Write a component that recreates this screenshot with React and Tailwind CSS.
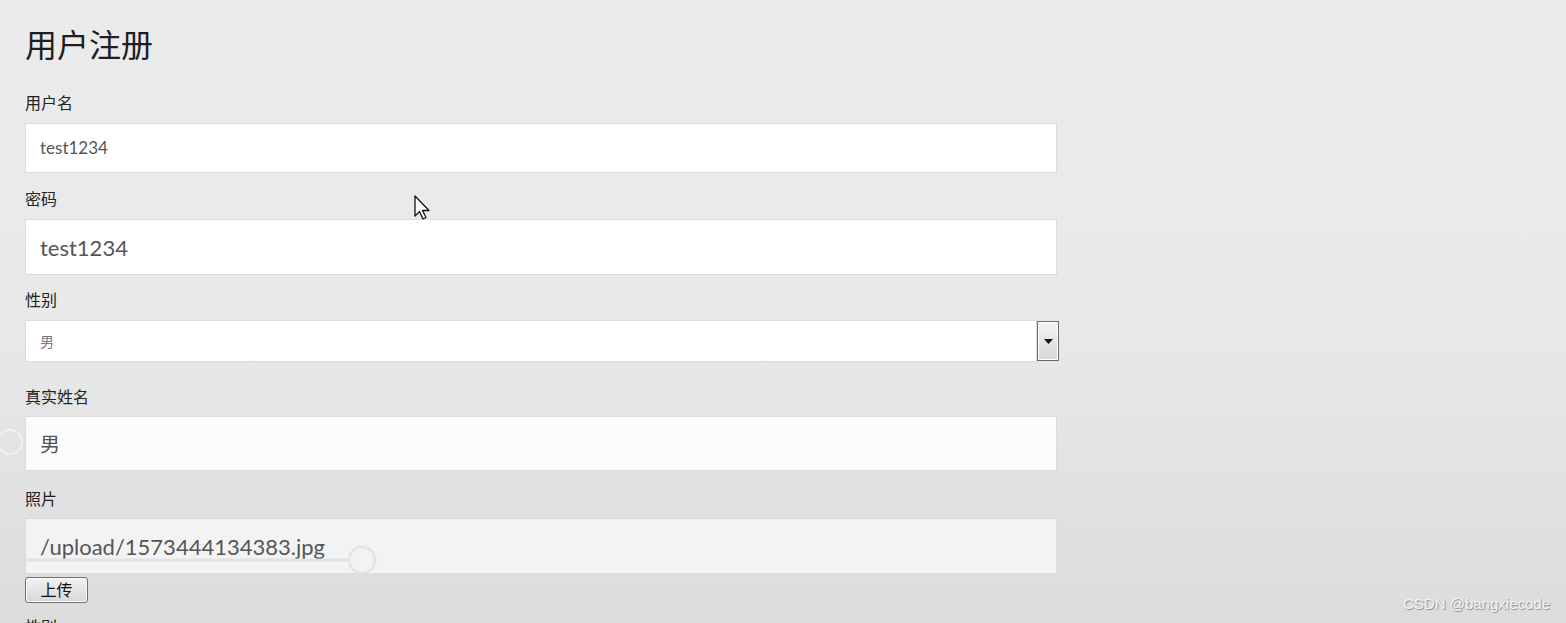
import React from "react";

const latin = "font-['Lato','Noto_Sans_CJK_SC',sans-serif]";

const Label = ({ children, className = "" }) => (
    <p className={`text-[16px] leading-[20px] text-[#222] ${className}`}>{children}</p>
);

const Field = ({ value, className = "", textClass = "text-[22px]" }) => (
    <div className={`w-[1032px] border border-[#dcdcdc] flex items-center px-[14px] text-[#555] ${textClass} ${className}`}>
        {value}
    </div>
);

const App = () => {
    return (
        <div className={`relative h-[623px] w-full overflow-hidden bg-linear-to-b from-[#ebebeb] via-[#e9e9e9] to-[#dcdcdc] ${latin}`}>
            <div className="flex flex-col pl-[25px] pt-[27px]">
                <h1 className="text-[32px] leading-[36px] text-[#1e1e1e]">用户注册</h1>

                <Label className="mt-[30px]">用户名</Label>
                <Field value="test1234" className="mt-[10px] h-[50px] bg-white" textClass="text-[17px]" />

                <Label className="mt-[16px]">密码</Label>
                <Field value="test1234" className="mt-[10px] h-[56px] bg-white" />

                <Label className="mt-[15px]">性别</Label>
                <div className="mt-[10px] flex h-[42px] w-[1034px] items-center">
                    <div className="flex h-full flex-1 items-center border border-[#dcdcdc] bg-white px-[14px] text-[14px] text-[#777]">男</div>
                    <div className="flex h-[40px] w-[22px] items-center justify-center border border-[#6a6a6a] bg-linear-to-b from-[#f4f4f4] to-[#d6d6d6] shadow-[inset_0_0_0_1px_#fff]">
                        <svg width="9" height="5" viewBox="0 0 9 5"><path d="M0 0h9L4.5 5z" fill="#111" /></svg>
                    </div>
                </div>

                <Label className="mt-[25px]">真实姓名</Label>
                <Field value="男" className="mt-[9px] h-[55px] bg-[#fcfcfc]" textClass="text-[20px]" />

                <Label className="mt-[18px]">照片</Label>
                <Field value="/upload/1573444134383.jpg" className="mt-[9px] h-[56px] bg-[#f3f3f3]" />

                <button className="mt-[3px] h-[26px] w-[63px] rounded-[3px] border border-[#707070] bg-linear-to-b from-[#f2f2f2] to-[#d8d8d8] text-[16px] leading-none text-[#111] shadow-[inset_0_0_0_1px_#fafafa]">上传</button>

                <Label className="mt-[14px]">性别</Label>
            </div>

            {/* faint player overlay */}
            <svg className="pointer-events-none absolute left-0 top-0" width="400" height="600">
                <line x1="0" y1="560" x2="348" y2="560" stroke="#d4e2ee" strokeWidth="3" opacity="0.8" />
                <circle cx="362" cy="560" r="13" fill="none" stroke="#d4e2ee" strokeWidth="2.5" opacity="0.8" />
                <circle cx="10" cy="442" r="12" fill="none" stroke="#ffffff" strokeWidth="2" opacity="0.5" />
            </svg>

            {/* mouse cursor */}
            <svg className="pointer-events-none absolute left-[414px] top-[195px]" width="20" height="28" viewBox="0 0 20 28">
                <path d="M1 1v20l4.5-4.5 3.5 7.5 3-1.5-3.5-7H15z" fill="#fff" stroke="#111" strokeWidth="1.3" strokeLinejoin="round" />
            </svg>

            <p className="absolute right-[16px] top-[594px] font-['Liberation_Sans',sans-serif] text-[15px] leading-[20px] text-[#f4f4f4] [text-shadow:1px_1px_1px_#8a8a8a]">CSDN @bangxiecode</p>
        </div>
    );
};

export default App;
